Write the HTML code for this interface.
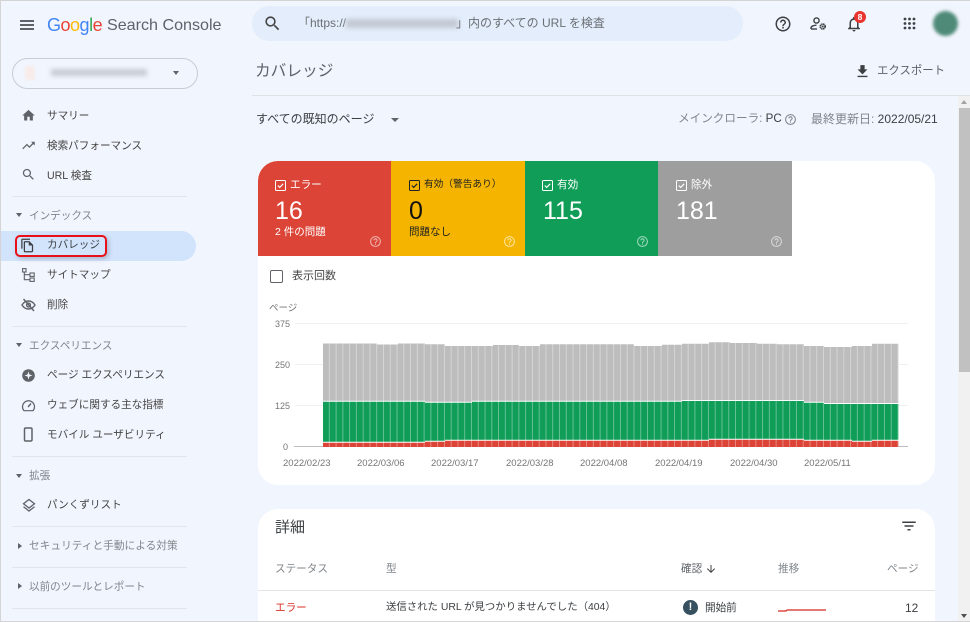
<!DOCTYPE html>
<html lang="ja"><head><meta charset="utf-8"><title>Search Console</title>
<style>
html,body{margin:0;padding:0;width:970px;height:622px;overflow:hidden}
body{position:relative;background:#f1f5fd;font-family:"Liberation Sans","Noto Sans CJK JP",sans-serif;color:#3c4043}
.t{position:absolute;white-space:nowrap;line-height:20px;font-size:10.6px}
.a{position:absolute}
.nav{left:47px;color:#444;margin-top:1px}
.sec{left:29px;color:#80868b;margin-top:1px}
.hr{position:absolute;left:12px;width:175px;height:1px;background:#e2e5ea}
svg.i{position:absolute;fill:#5f6368}
.tri{position:absolute;width:0;height:0;border-left:3.5px solid transparent;border-right:3.5px solid transparent;border-top:4px solid #5f6368}
.trr{position:absolute;width:0;height:0;border-top:3.5px solid transparent;border-bottom:3.5px solid transparent;border-left:4px solid #5f6368}
.card{position:absolute;top:161px;height:95px}
.y{color:#757575;font-size:9px}
.x{color:#757575;font-size:9.5px;top:454px}
.num{font-size:25px;top:201px}
</style></head><body>

<!-- frame -->
<div class="a" style="left:0;top:0;width:970px;height:1px;background:#d4d4d4"></div>
<div class="a" style="left:0;top:0;width:1px;height:622px;background:#d4d4d4"></div>
<div class="a" style="left:0;top:621px;width:970px;height:1px;background:#d4d4d4;z-index:5"></div>

<!-- header -->
<div class="a" style="left:20px;top:20px;width:14px;height:2px;background:#5f6368;box-shadow:0 4px 0 #5f6368,0 8px 0 #5f6368"></div>
<div class="t" style="left:47px;top:15px;font-size:18px;letter-spacing:-.5px"><span style="color:#4285f4">G</span><span style="color:#ea4335">o</span><span style="color:#fbbc05">o</span><span style="color:#4285f4">g</span><span style="color:#34a853">l</span><span style="color:#ea4335">e</span></div>
<div class="t" style="left:107px;top:15px;font-size:16.1px;color:#5f6368">Search Console</div>

<div class="a" style="left:252px;top:6px;width:491px;height:35px;border-radius:18px;background:#e3edfb"></div>
<svg class="i" style="left:263px;top:14px;fill:#444" width="19" height="19" viewBox="0 0 24 24"><path d="M15.5 14h-.79l-.28-.27C15.41 12.59 16 11.11 16 9.5 16 5.91 13.09 3 9.5 3S3 5.91 3 9.5 5.91 16 9.500 16c1.61 0 3.09-.59 4.23-1.57l.27.28v.79l5 4.99L20.49 19l-4.99-5zm-6 0C7.01 14 5 11.99 5 9.5S7.01 5 9.5 5 14 7.01 14 9.5 11.99 14 9.5 14z"/></svg>
<div class="t" style="left:298px;top:13px;font-size:12px;color:#6b7075">「https://</div>
<div class="a" style="left:346px;top:19px;width:112px;height:9px;background:#c3c9d3;filter:blur(2.5px)"></div>
<div class="t" style="left:456px;top:13px;font-size:12px;color:#6b7075">」内のすべての URL を検査</div>

<svg class="i" style="left:774px;top:15px;fill:#3c4043" width="18" height="18" viewBox="0 0 24 24"><path d="M11 18h2v-2h-2v2zm1-16C6.48 2 2 6.48 2 12s4.48 10 10 10 10-4.48 10-10S17.52 2 12 2zm0 18c-4.41 0-8-3.59-8-8s3.59-8 8-8 8 3.59 8 8-3.59 8-8 8zm0-14c-2.21 0-4 1.79-4 4h2c0-1.1.9-2 2-2s2 .9 2 2c0 2-3 1.75-3 5h2c0-2.25 3-2.5 3-5 0-2.21-1.79-4-4-4z"/></svg>
<svg class="a" style="left:810px;top:16px" width="17" height="16" viewBox="0 0 17 16" fill="none" stroke="#3c4043" stroke-width="1.4"><circle cx="6.5" cy="4.5" r="2.6"/><path d="M1 13v-1c0-1.8 3-2.8 5.5-2.8"/><path d="M1 13h6"/><circle cx="12.7" cy="10.5" r="2.4" stroke-width="1.8" stroke-dasharray="1.4 .5"/><circle cx="12.7" cy="10.5" r=".6" stroke-width=".8"/></svg>
<svg class="i" style="left:845px;top:15px;fill:#3c4043" width="18" height="18" viewBox="0 0 24 24"><path d="M12 22c1.1 0 2-.9 2-2h-4c0 1.1.9 2 2 2zm6-6v-5c0-3.07-1.63-5.64-4.5-6.32V4c0-.83-.67-1.5-1.5-1.5s-1.5.67-1.5 1.5v.68C7.64 5.36 6 7.92 6 11v5l-2 2v1h16v-1l-2-2zm-2 1H8v-6c0-2.48 1.51-4.5 4-4.5s4 2.02 4 4.5v6z"/></svg>
<div class="a" style="left:854px;top:11px;width:12px;height:12px;border-radius:50%;background:#e8352e;color:#fff;font-size:8.5px;font-weight:bold;line-height:12px;text-align:center">8</div>
<svg class="a" style="left:903px;top:17px" width="13" height="13" viewBox="0 0 13 13" fill="#3c4043"><circle cx="2" cy="2" r="1.4"/><circle cx="6.5" cy="2" r="1.4"/><circle cx="11" cy="2" r="1.4"/><circle cx="2" cy="6.5" r="1.4"/><circle cx="6.5" cy="6.5" r="1.4"/><circle cx="11" cy="6.5" r="1.4"/><circle cx="2" cy="11" r="1.4"/><circle cx="6.5" cy="11" r="1.4"/><circle cx="11" cy="11" r="1.4"/></svg>
<div class="a" style="left:933px;top:11px;width:25px;height:25px;border-radius:50%;background:#4f8a78;filter:blur(1.5px)"></div>

<!-- sidebar -->
<div class="a" style="left:12px;top:58px;width:184px;height:29px;border:1px solid #c9ccd0;border-radius:16px"></div>
<div class="a" style="left:25px;top:66px;width:10px;height:14px;background:#f7ecea;filter:blur(1px)"></div>
<div class="a" style="left:51px;top:69px;width:96px;height:7px;background:#c8ccd3;filter:blur(2.5px)"></div>
<div class="tri" style="left:173px;top:71px"></div>

<svg class="i" style="left:21px;top:108px" width="15" height="15" viewBox="0 0 24 24"><path d="M10 20v-6h4v6h5v-8h3L12 3 2 12h3v8z"/></svg>
<div class="t nav" style="top:105px">サマリー</div>
<svg class="i" style="left:21px;top:138px" width="15" height="15" viewBox="0 0 24 24"><path d="M16 6l2.29 2.29-4.88 4.88-4-4L2 16.59 3.41 18l6-6 4 4 6.3-6.29L22 12V6z"/></svg>
<div class="t nav" style="top:135px">検索パフォーマンス</div>
<svg class="i" style="left:21px;top:167px" width="15" height="15" viewBox="0 0 24 24"><path d="M15.5 14h-.79l-.28-.27C15.41 12.59 16 11.11 16 9.5 16 5.91 13.09 3 9.5 3S3 5.91 3 9.5 5.91 16 9.5 16c1.61 0 3.09-.59 4.23-1.57l.27.28v.79l5 4.99L20.49 19l-4.99-5zm-6 0C7.01 14 5 11.99 5 9.5S7.01 5 9.5 5 14 7.01 14 9.5 11.99 14 9.5 14z"/></svg>
<div class="t nav" style="top:165px">URL 検査</div>
<div class="hr" style="top:196px"></div>

<div class="tri" style="left:16px;top:213px"></div>
<div class="t sec" style="top:205px">インデックス</div>

<div class="a" style="left:1px;top:231px;width:195px;height:30px;border-radius:0 15px 15px 0;background:#d2e3fc"></div>
<div class="a" style="left:15px;top:235px;width:88px;height:18px;border:2px solid #e8111a;border-radius:5px;box-shadow:2px 2px 4px rgba(60,64,67,.25)"></div>
<svg class="i" style="left:20px;top:238px;fill:#3c4043" width="15" height="15" viewBox="0 0 24 24"><path d="M16 1H4c-1.1 0-2 .9-2 2v14h2V3h12V1zm-1 4H8c-1.1 0-1.99.9-1.99 2L6 21c0 1.1.89 2 1.99 2H19c1.1 0 2-.9 2-2V11l-6-6zM8 21V7h6v5h5v9H8z"/></svg>
<div class="t nav" style="top:234px;color:#3c4043">カバレッジ</div>

<svg class="a" style="left:22px;top:268px" width="13" height="14" viewBox="0 0 13 14" fill="none" stroke="#5f6368" stroke-width="1.1"><rect x=".6" y=".6" width="3.4" height="3.4"/><rect x="8" y="5" width="4.2" height="3.4"/><rect x="8" y="10" width="4.2" height="3.4"/><path d="M2.3 4v7.7H8M2.3 6.7H8"/></svg>
<div class="t nav" style="top:264px">サイトマップ</div>
<svg class="a" style="left:21px;top:298px" width="15" height="14" viewBox="0 0 15 14" fill="none" stroke="#5f6368" stroke-width="1.4"><path d="M1 7c1.6-2.6 3.8-4 6.5-4S12.4 4.4 14 7c-1.6 2.6-3.8 4-6.5 4S2.6 9.6 1 7z"/><circle cx="7.5" cy="7" r="1.9"/><path d="M2.5 1l10.5 12"/></svg>
<div class="t nav" style="top:294px">削除</div>
<div class="hr" style="top:326px"></div>

<div class="tri" style="left:16px;top:343px"></div>
<div class="t sec" style="top:335px">エクスペリエンス</div>
<svg class="a" style="left:21px;top:368px" width="15" height="15" viewBox="0 0 15 15"><circle cx="7.5" cy="7.5" r="6.3" fill="#5f6368"/><path d="M7.5 3.5l1 3 3 1-3 1-1 3-1-3-3-1 3-1z" fill="#f1f5fd"/></svg>
<div class="t nav" style="top:364px">ページ エクスペリエンス</div>
<svg class="a" style="left:21px;top:398px" width="15" height="15" viewBox="0 0 15 15" fill="none" stroke="#5f6368" stroke-width="1.2"><path d="M3 12.7h9a6 6 0 1 0-9 0z"/><path d="M7 9l3-3.5" stroke-width="1.4"/></svg>
<div class="t nav" style="top:394px">ウェブに関する主な指標</div>
<svg class="a" style="left:23px;top:427px" width="11" height="15" viewBox="0 0 11 15" fill="none" stroke="#5f6368" stroke-width="1.5"><rect x="1.5" y="1" width="7.5" height="13" rx="1.2"/></svg>
<div class="t nav" style="top:424px">モバイル ユーザビリティ</div>
<div class="hr" style="top:456px"></div>

<div class="tri" style="left:16px;top:474px"></div>
<div class="t sec" style="top:465px">拡張</div>
<svg class="a" style="left:22px;top:498px" width="14" height="14" viewBox="0 0 14 14" fill="none" stroke="#5f6368" stroke-width="1.3"><path d="M7 1.5L12.5 5.8 7 10 1.5 5.8z"/><path d="M1.5 8.7L7 13l5.5-4.3"/></svg>
<div class="t nav" style="top:494px">パンくずリスト</div>
<div class="hr" style="top:526px"></div>

<div class="trr" style="left:18px;top:543px"></div>
<div class="t sec" style="top:535px;font-size:10.7px">セキュリティと手動による対策</div>
<div class="hr" style="top:567px"></div>
<div class="trr" style="left:18px;top:583px"></div>
<div class="t sec" style="top:576px">以前のツールとレポート</div>
<div class="hr" style="top:608px"></div>

<!-- page head -->
<div class="t" style="left:255px;top:62px;font-size:15.7px;color:#5f6368">カバレッジ</div>
<svg class="i" style="left:854px;top:63px;fill:#3c4043" width="17" height="17" viewBox="0 0 24 24"><path d="M19 9h-4V3H9v6H5l7 7 7-7zM5 18v2h14v-2H5z"/></svg>
<div class="t" style="left:877px;top:61px;font-size:11.4px;color:#5f6368">エクスポート</div>
<div class="a" style="left:252px;top:95px;width:718px;height:1px;background:#dfe1e5"></div>

<div class="t" style="left:256px;top:109px;font-size:12px;color:#3c4043">すべての既知のページ</div>
<div class="tri" style="left:391px;top:118px;border-left-width:4px;border-right-width:4px;border-top-width:4.5px"></div>
<div class="t" style="left:678px;top:109px;font-size:11.6px;color:#80868b">メインクローラ: <span style="color:#3c4043">PC</span></div>
<svg class="i" style="left:784px;top:113px;fill:#80868b" width="13" height="13" viewBox="0 0 24 24"><path d="M11 18h2v-2h-2v2zm1-16C6.48 2 2 6.48 2 12s4.48 10 10 10 10-4.48 10-10S17.52 2 12 2zm0 18c-4.41 0-8-3.59-8-8s3.59-8 8-8 8 3.59 8 8-3.59 8-8 8zm0-14c-2.21 0-4 1.79-4 4h2c0-1.1.9-2 2-2s2 .9 2 2c0 2-3 1.75-3 5h2c0-2.25 3-2.5 3-5 0-2.21-1.79-4-4-4z"/></svg>
<div class="t" style="left:811px;top:109px;font-size:12px;color:#80868b">最終更新日: <span style="color:#3c4043">2022/05/21</span></div>

<!-- scrollbar -->
<div class="a" style="left:958px;top:96px;width:12px;height:526px;background:#f1f1f1"></div>
<div class="a" style="left:959px;top:108px;width:11px;height:264px;background:#c1c1c1"></div>
<div class="tri" style="left:961px;top:100px;border-top:0;border-bottom:4px solid #a3a3a3"></div>
<div class="tri" style="left:961px;top:614px;border-top-color:#505050"></div>

<!-- coverage card -->
<div class="a" style="left:258px;top:161px;width:677px;height:324px;background:#fff;border-radius:20px"></div>
<div class="card" style="left:258px;width:133px;background:#db4437;border-radius:20px 0 0 0"></div>
<div class="card" style="left:391px;width:134px;background:#f4b400"></div>
<div class="card" style="left:525px;width:133px;background:#0f9d58"></div>
<div class="card" style="left:658px;width:134px;background:#9e9e9e"></div>

<svg class="a" style="left:275px;top:180px" width="11" height="11" viewBox="0 0 11 11" fill="none" stroke="#fff"><rect x=".5" y=".5" width="10" height="10" rx="1"/><path d="M2.8 5.5l1.9 1.9 3.5-3.6" stroke-width="1.2"/></svg>
<div class="t" style="left:290px;top:175px;color:#fff">エラー</div>
<div class="t num" style="left:275px;color:#fff">16</div>
<div class="t" style="left:275px;top:222px;color:#fff;font-size:10.5px">2 件の問題</div>
<svg class="i" style="left:369px;top:235px;fill:rgba(255,255,255,.6)" width="13" height="13" viewBox="0 0 24 24"><path d="M11 18h2v-2h-2v2zm1-16C6.48 2 2 6.48 2 12s4.48 10 10 10 10-4.48 10-10S17.52 2 12 2zm0 18c-4.41 0-8-3.59-8-8s3.59-8 8-8 8 3.59 8 8-3.59 8-8 8zm0-14c-2.21 0-4 1.79-4 4h2c0-1.1.9-2 2-2s2 .9 2 2c0 2-3 1.75-3 5h2c0-2.25 3-2.5 3-5 0-2.21-1.79-4-4-4z"/></svg>

<svg class="a" style="left:409px;top:180px" width="11" height="11" viewBox="0 0 11 11" fill="none" stroke="#222"><rect x=".5" y=".5" width="10" height="10" rx="1"/><path d="M2.8 5.5l1.9 1.9 3.5-3.6" stroke-width="1.2"/></svg>
<div class="t" style="left:424px;top:175px;color:#222;font-size:9.7px">有効（警告あり）</div>
<div class="t num" style="left:409px;color:#111">0</div>
<div class="t" style="left:409px;top:222px;color:#222;font-size:10.5px">問題なし</div>
<svg class="i" style="left:503px;top:235px;fill:rgba(255,255,255,.6)" width="13" height="13" viewBox="0 0 24 24"><path d="M11 18h2v-2h-2v2zm1-16C6.48 2 2 6.48 2 12s4.48 10 10 10 10-4.48 10-10S17.52 2 12 2zm0 18c-4.41 0-8-3.59-8-8s3.59-8 8-8 8 3.59 8 8-3.59 8-8 8zm0-14c-2.21 0-4 1.79-4 4h2c0-1.1.9-2 2-2s2 .9 2 2c0 2-3 1.75-3 5h2c0-2.25 3-2.5 3-5 0-2.21-1.79-4-4-4z"/></svg>

<svg class="a" style="left:542px;top:180px" width="11" height="11" viewBox="0 0 11 11" fill="none" stroke="#fff"><rect x=".5" y=".5" width="10" height="10" rx="1"/><path d="M2.8 5.5l1.9 1.9 3.5-3.6" stroke-width="1.2"/></svg>
<div class="t" style="left:557px;top:175px;color:#fff">有効</div>
<div class="t num" style="left:543px;color:#fff">115</div>
<svg class="i" style="left:636px;top:235px;fill:rgba(255,255,255,.6)" width="13" height="13" viewBox="0 0 24 24"><path d="M11 18h2v-2h-2v2zm1-16C6.48 2 2 6.48 2 12s4.48 10 10 10 10-4.48 10-10S17.52 2 12 2zm0 18c-4.41 0-8-3.59-8-8s3.59-8 8-8 8 3.59 8 8-3.59 8-8 8zm0-14c-2.21 0-4 1.79-4 4h2c0-1.1.9-2 2-2s2 .9 2 2c0 2-3 1.75-3 5h2c0-2.25 3-2.5 3-5 0-2.21-1.79-4-4-4z"/></svg>

<svg class="a" style="left:676px;top:180px" width="11" height="11" viewBox="0 0 11 11" fill="none" stroke="#fff"><rect x=".5" y=".5" width="10" height="10" rx="1"/><path d="M2.8 5.5l1.9 1.9 3.5-3.6" stroke-width="1.2"/></svg>
<div class="t" style="left:691px;top:175px;color:#fff">除外</div>
<div class="t num" style="left:676px;color:#fff">181</div>
<svg class="i" style="left:770px;top:235px;fill:rgba(255,255,255,.6)" width="13" height="13" viewBox="0 0 24 24"><path d="M11 18h2v-2h-2v2zm1-16C6.48 2 2 6.48 2 12s4.48 10 10 10 10-4.48 10-10S17.52 2 12 2zm0 18c-4.41 0-8-3.59-8-8s3.59-8 8-8 8 3.59 8 8-3.59 8-8 8zm0-14c-2.21 0-4 1.79-4 4h2c0-1.1.9-2 2-2s2 .9 2 2c0 2-3 1.75-3 5h2c0-2.25 3-2.5 3-5 0-2.21-1.79-4-4-4z"/></svg>

<div class="a" style="left:270px;top:270px;width:11px;height:11px;border:1.5px solid #5f6368;border-radius:2px"></div>
<div class="t" style="left:292px;top:266px;font-size:11px;color:#444">表示回数</div>

<!-- chart -->
<div class="t" style="left:269px;top:299px;font-size:9.5px;color:#757575">ページ</div>
<div class="t y" style="left:275px;top:314px">375</div>
<div class="t y" style="left:275px;top:355px">250</div>
<div class="t y" style="left:275px;top:396px">125</div>
<div class="t y" style="left:283px;top:437px">0</div>
<svg class="a" style="left:0;top:0" width="970" height="622">
<defs><pattern id="g" x="323" y="0" width="6.77" height="10" patternUnits="userSpaceOnUse"><rect x="5.9" y="0" width=".9" height="10" fill="#fff" fill-opacity=".4"/></pattern></defs>
<path d="M295 323.5H908M295 364.5H323M295 405.5H323M899 364.5H908M899 405.5H908" stroke="#f0f0f0" stroke-width="1"/>
<path d="M294 446.5H323M898 446.5H908" stroke="#bdbdbd" stroke-width="1"/>
<path fill="#bdbdbd" d="M323 447V343.5H377V344.5H398V343.5H425V344.3H445V346H493V345H519V346H540V344.3H634V346H662V344.7H682V343.7H709V342.3H730V343H757V343.7H777V344.3H804V346H824V347H852V346H872V343.7H898.5V447Z"/>
<path fill="#fff" d="M323 447V400.7H425V401.7H472V400.7H682V400H804V401.7H824V403H898.5V447Z"/>
<path fill="#0f9d58" d="M323 447V401.7H425V402.7H472V401.7H682V401H804V402.7H824V404H898.5V447Z"/>
<path fill="#fff" d="M323 447V441.7H425V440.7H445V439.7H709V438.7H804V439.7H852V440.7H872V439.7H898.5V447Z"/>
<path fill="#db4437" d="M323 447V442.7H425V441.7H445V440.7H709V439.7H804V440.7H852V441.7H872V440.7H898.5V447Z"/>
<rect x="323" y="340" width="575.5" height="107" fill="url(#g)"/>
</svg>
<div class="t x" style="left:283px">2022/02/23</div>
<div class="t x" style="left:357px">2022/03/06</div>
<div class="t x" style="left:431px">2022/03/17</div>
<div class="t x" style="left:506px">2022/03/28</div>
<div class="t x" style="left:580px">2022/04/08</div>
<div class="t x" style="left:655px">2022/04/19</div>
<div class="t x" style="left:730px">2022/04/30</div>
<div class="t x" style="left:804px">2022/05/11</div>

<!-- details card -->
<div class="a" style="left:258px;top:509px;width:677px;height:113px;background:#fff;border-radius:20px 20px 0 0"></div>
<div class="t" style="left:275px;top:518px;font-size:15px;color:#3c4043">詳細</div>
<svg class="i" style="left:900px;top:517px;fill:#3c4043" width="18" height="18" viewBox="0 0 24 24"><path d="M10 18h4v-2h-4v2zM3 6v2h18V6H3zm3 7h12v-2H6v2z"/></svg>
<div class="t" style="left:275px;top:559px;color:#80868b">ステータス</div>
<div class="t" style="left:386px;top:559px;color:#80868b">型</div>
<div class="t" style="left:681px;top:559px;color:#5f6368">確認</div>
<svg class="i" style="left:705px;top:563px;fill:#3c4043" width="12" height="12" viewBox="0 0 24 24"><path d="M20 12l-1.41-1.41L13 16.17V4h-2v12.17l-5.58-5.59L4 12l8 8 8-8z"/></svg>
<div class="t" style="left:778px;top:559px;color:#80868b">推移</div>
<div class="t" style="left:887px;top:559px;color:#80868b">ページ</div>
<div class="a" style="left:258px;top:590px;width:677px;height:1px;background:#e2e4e7"></div>
<div class="t" style="left:275px;top:598px;color:#d93025">エラー</div>
<div class="t" style="left:386px;top:598px;color:#3c4043;font-size:10.4px">送信された URL が見つかりませんでした（404）</div>
<div class="a" style="left:683px;top:600px;width:15px;height:15px;border-radius:50%;background:#37505f;color:#fff;font-size:11px;font-weight:bold;line-height:15px;text-align:center">!</div>
<div class="t" style="left:705px;top:598px;color:#3c4043">開始前</div>
<svg class="a" style="left:778px;top:609px" width="48" height="3"><path d="M0 2H8L9 1H48" fill="none" stroke="#d32a1e" stroke-width="1.2"/></svg>
<div class="t" style="left:905px;top:598px;color:#3c4043;font-size:12px">12</div>
</body></html>
